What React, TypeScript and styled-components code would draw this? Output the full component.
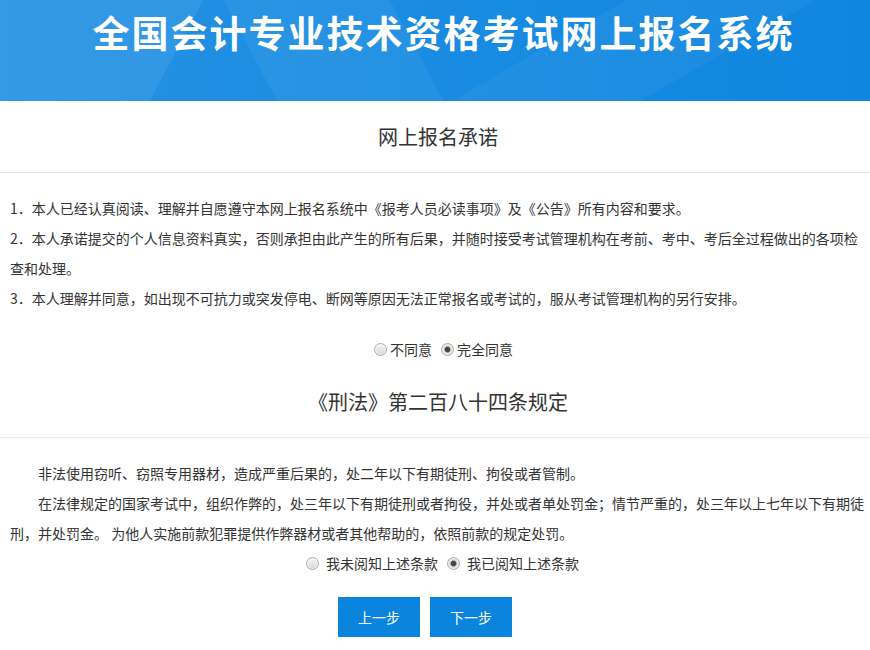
import React, { useState } from "react";
import styled, { createGlobalStyle } from "styled-components";

const Global = createGlobalStyle`
  html, body { margin: 0; padding: 0; background: #fff; }
  body {
    font-family: "Noto Sans CJK SC", "Noto Sans", sans-serif;
    color: #333;
    font-size: 14px;
  }
`;

const Header = styled.header`
  height: 101px;
  box-sizing: border-box;
  padding: 11px 0 0 17px;
  background-color: #1689e0;
  background-image:
    linear-gradient(118deg, rgba(255,255,255,0.07) 0 22%, rgba(255,255,255,0) 22% 100%),
    linear-gradient(62deg, rgba(255,255,255,0) 0 30%, rgba(255,255,255,0.05) 30% 48%, rgba(255,255,255,0) 48% 100%),
    linear-gradient(150deg, rgba(255,255,255,0) 0 60%, rgba(255,255,255,0.04) 60% 78%, rgba(0,0,0,0) 78% 100%),
    linear-gradient(90deg, #2692e3 0%, #1a8ce2 45%, #0f86e0 100%);
  text-align: center;
`;

const Title = styled.h1`
  margin: 0;
  font-family: "Noto Sans CJK SC", sans-serif;
  font-size: 37px;
  line-height: 42px;
  font-weight: 700;
  letter-spacing: 2px;
  color: #fff;
`;

const Main = styled.main`
  padding: 0 4px 0 10px;
`;

const Heading = styled.h2<{ $mt?: number }>`
  margin: ${(p) => p.$mt ?? 0}px -4px 0 -10px;
  padding: 22px 0 21px 6px;
  line-height: 28px;
  font-size: 20px;
  font-weight: 400;
  text-align: center;
  color: #333;
  border-bottom: 1px solid #e8e8e8;
`;

const Body = styled.div`
  padding-top: 20px;
`;

const Para = styled.p<{ $indent?: boolean }>`
  margin: 0;
  line-height: 30px;
  font-size: 14px;
  color: #333;
  text-indent: ${(p) => (p.$indent ? "2em" : "0")};
`;

const RadioRow = styled.div<{ $mt: number; $gap: number }>`
  display: flex;
  justify-content: center;
  align-items: center;
  height: 20px;
  margin-top: ${(p) => p.$mt}px;
  padding-left: ${(p) => p.$gap}px;
  font-size: 14px;
  line-height: 20px;
`;

const Option = styled.label<{ $gap: number; $first?: boolean }>`
  display: inline-flex;
  align-items: center;
  margin-left: ${(p) => (p.$first ? 0 : 4)}px;
  cursor: pointer;
  input { margin-right: ${(p) => p.$gap}px; }
`;

const Radio = styled.input.attrs({ type: "radio" })`
  appearance: none;
  -webkit-appearance: none;
  width: 13px;
  height: 13px;
  margin: 0 3px 0 5px;
  box-sizing: border-box;
  border-radius: 50%;
  border: 1px solid #a9a9a9;
  background: linear-gradient(#f6f6f6, #d6d6d6);
  box-shadow: inset 0 0 0 1px rgba(255,255,255,0.6);
  &:checked {
    background: radial-gradient(circle at 50% 50%, #474747 0 2.4px, #9a9a9a 2.9px, #e2e2e2 3.6px, #d2d2d2 100%);
  }
`;

const Buttons = styled.div`
  display: flex;
  justify-content: center;
  gap: 10px;
  margin-top: 24px;
  padding-right: 26px;
  padding-bottom: 20px;
`;

const Button = styled.button`
  width: 82px;
  height: 40px;
  border: none;
  border-radius: 0;
  background: #0a84dc;
  color: #fff;
  font-family: inherit;
  font-size: 14px;
  line-height: 40px;
  padding: 0;
  cursor: pointer;
`;

export default function App() {
  const [agree, setAgree] = useState("yes");
  const [known, setKnown] = useState("yes");
  return (
    <>
      <Global />
      <Header>
        <Title>全国会计专业技术资格考试网上报名系统</Title>
      </Header>
      <Main>
        <Heading>网上报名承诺</Heading>
        <Body>
          <Para>1．本人已经认真阅读、理解并自愿遵守本网上报名系统中《报考人员必读事项》及《公告》所有内容和要求。</Para>
          <Para>2．本人承诺提交的个人信息资料真实，否则承担由此产生的所有后果，并随时接受考试管理机构在考前、考中、考后全过程做出的各项检查和处理。</Para>
          <Para>3．本人理解并同意，如出现不可抗力或突发停电、断网等原因无法正常报名或考试的，服从考试管理机构的另行安排。</Para>
        </Body>
        <RadioRow $mt={26} $gap={6}>
          <Option $gap={3} $first>
            <Radio name="agree" checked={agree === "no"} onChange={() => setAgree("no")} />
            不同意
          </Option>
          <Option $gap={3}>
            <Radio name="agree" checked={agree === "yes"} onChange={() => setAgree("yes")} />
            完全同意
          </Option>
        </RadioRow>
        <Heading $mt={7}>《刑法》第二百八十四条规定</Heading>
        <Body>
          <Para $indent>非法使用窃听、窃照专用器材，造成严重后果的，处二年以下有期徒刑、拘役或者管制。</Para>
          <Para $indent>在法律规定的国家考试中，组织作弊的，处三年以下有期徒刑或者拘役，并处或者单处罚金；情节严重的，处三年以上七年以下有期徒刑，并处罚金。 为他人实施前款犯罪提供作弊器材或者其他帮助的，依照前款的规定处罚。</Para>
        </Body>
        <RadioRow $mt={5} $gap={4}>
          <Option $gap={7} $first>
            <Radio name="known" checked={known === "no"} onChange={() => setKnown("no")} />
            我未阅知上述条款
          </Option>
          <Option $gap={7}>
            <Radio name="known" checked={known === "yes"} onChange={() => setKnown("yes")} />
            我已阅知上述条款
          </Option>
        </RadioRow>
        <Buttons>
          <Button type="button">上一步</Button>
          <Button type="button">下一步</Button>
        </Buttons>
      </Main>
    </>
  );
}
